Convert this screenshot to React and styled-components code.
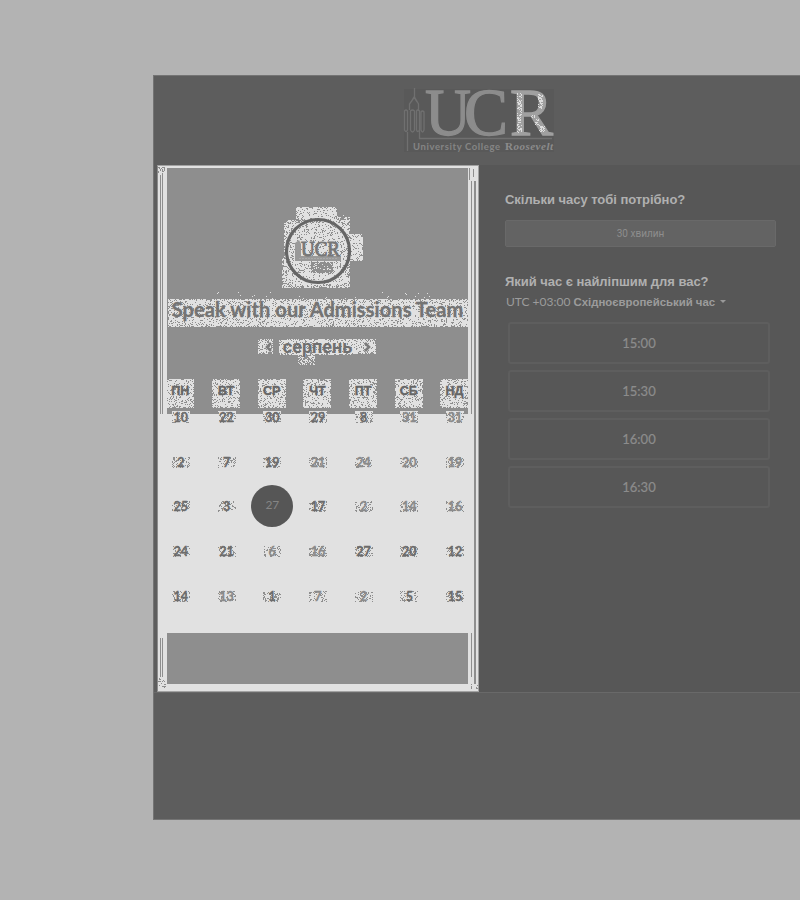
import React from 'react';
import styled, { createGlobalStyle } from 'styled-components';

const Global = createGlobalStyle`
  * { box-sizing: border-box; }
  body { margin: 0; background: #b3b3b3; overflow: hidden; }
`;

const Page = styled.div`
  width: 800px;
  height: 900px;
  padding: 75px 0 0 153px;
  background: #b3b3b3;
  font-family: 'Liberation Sans', sans-serif;
  overflow: hidden;
`;
const Dialog = styled.main`
  height: 745px;
  background: #5d5d5d;
  border: 1px solid #747474;
  border-right: 0;
  display: flex;
  flex-direction: column;
`;
const Header = styled.header`
  height: 89px;
  padding: 12px 0 0 249px;
`;
const Logo = styled.svg`
  display: block;
  overflow: visible;
`;
const Body = styled.div`
  display: flex;
  height: 528px;
  padding-left: 3px;
  border-bottom: 1px solid #696969;
`;
const Calendar = styled.section`
  width: 322px;
  height: 527px;
  flex: none;
  display: flex;
  flex-direction: column;
  background: #e1e1e1;
  border: 1px solid #a2a2a2;
  border-left-color: #8b8b8b;
  position: relative;
  padding-top: 2px;
`;
const Intro = styled.div`
  height: 246px;
  margin: 0 10px 0 9px;
  background: #8e8e8e;
  display: flex;
  flex-direction: column;
  align-items: center;
`;
const Bottom = styled.div`
  height: 51px;
  margin: 0 10px 0 9px;
  background: #8e8e8e;
`;
const EdgeRules = styled.svg`
  position: absolute;
  inset: 0;
`;
const Badge = styled.div`
  height: 131px;
  width: 301px;
  flex: none;
`;
const Title = styled.h1`
  position: relative;
  height: 28px;
  width: 301px;
  flex: none;
  margin: 0;
  font: 700 20px/20px Lato, sans-serif;
  color: #747474;
  text-align: center;
  white-space: nowrap;
  letter-spacing: 0.08px;
  -webkit-text-stroke: 0.3px #747474;
`;
const Front = styled.span`
  position: relative;
`;
const Month = styled.div`
  margin-top: 12px;
  height: 16px;
  width: 120px;
  display: flex;
  justify-content: space-between;
  align-items: center;
  padding: 0 7px 0 7px;
  position: relative;
  font: 700 18px/16px Roboto, sans-serif;
  color: #707070;
`;
const Chevron = styled.svg`
  position: relative;
  width: 7px;
  height: 10px;
  fill: none;
  stroke: #7c7c7c;
  stroke-width: 2.6;
`;
const Weekdays = styled.div`
  display: grid;
  grid-template-columns: repeat(7, 45.7px);
  width: 320px;
  flex: none;
  margin-top: 24px;
`;
const Weekday = styled.div`
  height: 29px;
  position: relative;
  text-align: center;
  font: 700 12.5px/25px 'Liberation Sans', sans-serif;
  color: #666;
  -webkit-text-stroke: 0.4px #666;
`;
const Days = styled.div`
  height: 219px;
  display: grid;
  grid-template-columns: repeat(7, 45.7px);
  grid-template-rows: repeat(5, 44.7px);
  align-content: start;
`;
const Day = styled.div`
  position: relative;
  margin-top: -4px;
  height: 14px;
  text-align: center;
  font: 700 12.5px/15.5px Lato, sans-serif;
  color: ${(p) => (p.$faded ? '#8b8b8b' : '#6c6c6c')};
  -webkit-text-stroke: 0.3px currentColor;
`;
const Selected = styled.div`
  width: 42px;
  height: 42px;
  margin: -18px auto 0 2px;
  border-radius: 50%;
  background: #565656;
  color: #858585;
  text-align: center;
  font: 400 12px/40px Lato, sans-serif;
`;
const Patch = styled.svg`
  position: absolute;
  left: 50%;
  top: ${(p) => p.$top || 0}px;
  transform: translateX(-50%);
  shape-rendering: crispEdges;
`;
const Times = styled.section`
  flex: 1;
  background: #575757;
  padding: 26px 24px 0 26px;
  color: #b0b0b0;
`;
const Question = styled.h2`
  margin: 0;
  font: 700 13px/17px 'Liberation Sans', sans-serif;
  white-space: nowrap;
  letter-spacing: -0.04px;
`;
const Duration = styled.button`
  display: block;
  width: 271px;
  height: 27px;
  margin: 12px 0 26px;
  padding: 0;
  border: 1px solid #696969;
  border-radius: 2px;
  background: #636363;
  color: #8e8e8e;
  font: 400 10px/25px Roboto, sans-serif;
`;
const Zone = styled.div`
  display: flex;
  align-items: center;
  height: 16px;
  margin-top: 4px;
  font: 700 11.4px/16px 'Liberation Sans', sans-serif;
  color: #9c9c9c;
  white-space: nowrap;
`;
const Offset = styled.span`
  font: 400 12px/16px Lato, sans-serif;
  margin: 0 3px 0 1px;
`;
const Caret = styled.svg`
  width: 6px;
  height: 4px;
  margin-left: 5px;
  fill: #999;
`;
const Slots = styled.div`
  display: grid;
  gap: 6px;
  padding: 12px 0 0 3px;
`;
const Slot = styled.button`
  width: 262px;
  height: 42px;
  padding: 0;
  border: 2px solid #5e5e5e;
  border-radius: 3px;
  background: #575757;
  color: #8c8c8c;
  font: 400 13px/36px Lato, sans-serif;
  -webkit-text-stroke: 0.2px #8c8c8c;
`;

function grain(x0, y0, w, h, density, seed, soft = 0) {
  let n = seed * 7919 + 17;
  let d = '';
  for (let y = 0; y < h; y++) {
    for (let x = 0; x < w; x++) {
      n = (n + 0x6d2b79f5) | 0;
      let t = Math.imul(n ^ (n >>> 15), 1 | n);
      t = (t + Math.imul(t ^ (t >>> 7), 61 | t)) ^ t;
      const value = ((t ^ (t >>> 14)) >>> 0) / 4294967296;
      const edge = Math.min(x, y, w - 1 - x, h - 1 - y);
      const limit = edge < soft ? density * 0.7 : density;
      if (value < limit) d += `M${x0 + x} ${y0 + y}h1v1h-1z`;
    }
  }
  return d;
}

function Grain({ w, h, top, seed = 1, density = 0.78, color = '#e1e1e1', soft = 1 }) {
  return (
    <Patch width={w} height={h} $top={top} aria-hidden="true">
      <path fill={color} d={grain(0, 0, w, h, density, seed, soft)} />
    </Patch>
  );
}

function CollegeLogo() {
  return (
    <Logo width="152" height="66" viewBox="403 88 152 66">
      <path fill="#595959" d="M404 89h150v63H404z" />
      <g fill="none" stroke="#707070" strokeWidth="1.3">
        <path d="M407.500 151v-19M404.500 111q1.500-2 3 0v19q-1.500 3-3 0zM410.500 111q2-2 4 0v19q-2 4-4 0zM416.500 111q1-2 3 0v19q-2 3-3 0zM421 112q1.500-2 3 0v18q-1.500 4-3 0zM409.500 110v-6l5-7v-9M414.500 97l4 7v7M411 102l3-5 3 5M419.500 130v8.500H552" />
      </g>
      <g fontFamily="Liberation Serif, serif" fontSize="68" strokeWidth="1.3">
        <text x="425" y="134.500" fill="#8c8c8c" stroke="#8c8c8c" textLength="46" lengthAdjust="spacingAndGlyphs">U</text>
        <text x="464" y="134.500" fill="#8c8c8c" stroke="#8c8c8c" textLength="44" lengthAdjust="spacingAndGlyphs">C</text>
        <text x="510" y="135" fill="#a0a0a0" stroke="#a0a0a0" textLength="43" lengthAdjust="spacingAndGlyphs">R</text>
      </g>
      <path d={grain(517, 92, 5, 41, 0.4, 4) + grain(538, 94, 5, 15, 0.5, 5) + grain(531, 114, 4, 5, 0.5, 6) + grain(535, 119, 4, 6, 0.5, 7) + grain(539, 125, 6, 7, 0.5, 8)} fill="#ddd" shapeRendering="crispEdges" />
      <text x="413" y="149.500" fill="#858585" fontFamily="Lato, sans-serif" fontSize="9.500" fontWeight="700" textLength="87" lengthAdjust="spacing">University College</text>
      <text x="505" y="149.500" fill="#8c8c8c" fontFamily="Liberation Serif, serif" fontSize="11" fontWeight="700" textLength="48" lengthAdjust="spacing">
        R<tspan fontStyle="italic">oosevelt</tspan>
      </text>
    </Logo>
  );
}

function RoundLogo() {
  return (
    <Logo width="301" height="131" viewBox="167 168 301 131">
      <g fill="#e1e1e1" shapeRendering="crispEdges">
        <path d={grain(284, 220, 66, 68, 0.82, 9, 3)} />
        <path d={grain(296, 207, 41, 13, 0.86, 10, 1)} />
        <path d={grain(350, 234, 13, 27, 0.82, 11, 1)} />
        <path d={grain(282, 258, 4, 30, 0.5, 12) + grain(337, 215, 13, 7, 0.25, 13) + grain(215, 292, 230, 7, 0.018, 14)} />
      </g>
      <circle cx="318" cy="251" r="31.500" fill="none" stroke="#666" strokeWidth="3.200" />
      <path fill="#999" d="M295 243l4-3 2 4v12h40v5h-46z" />
      <path d="M299 258.500h39" stroke="#aaa" strokeDasharray="2 1" />
      <text x="301" y="255.500" fill="#777" stroke="#777" strokeWidth="1" fontFamily="Liberation Serif, serif" fontSize="22" textLength="39" lengthAdjust="spacingAndGlyphs">UCR</text>
      <path fill="#8e8e8e" d="M311 262h22v11h-22z" />
      <path fill="#e1e1e1" d={grain(311, 262, 22, 11, 0.12, 20)} shapeRendering="crispEdges" />
    </Logo>
  );
}

const weekdays = ['ПН', 'ВТ', 'СР', 'ЧТ', 'ПТ', 'СБ', 'НД'];
const days = [
  10, 22, 30, 29, 8, 31, 31,
  2, 7, 19, 21, 24, 20, 19,
  25, 3, 27, 17, 2, 14, 16,
  24, 21, 6, 16, 27, 20, 12,
  14, 13, 1, 7, 2, 5, 15,
];
const faded = new Set([5, 6, 10, 11, 12, 13, 18, 19, 20, 23, 24, 29, 31, 32]);
const slots = ['15:00', '15:30', '16:00', '16:30'];

export default function App() {
  return (
    <Page>
      <Global />
      <Dialog>
        <Header><CollegeLogo /></Header>
        <Body>
          <Calendar>
            <EdgeRules width="320" height="525" viewBox="158 166 320 525" aria-hidden="true">
              <g fill="#8e8e8e" shapeRendering="crispEdges">
                <path d="M160 175h1v239h-1zM162 173h1v241h-1zM471 181h1v233h-1zM474 181h2v503h-2zM160 638h1v39h-1zM162 638h1v39h-1zM471 633h1v44h-1z" />
                <path d={grain(158, 167, 7, 6, 0.3, 31) + grain(158, 678, 8, 10, 0.22, 33) + grain(471, 684, 7, 6, 0.2, 34)} />
                <path d="M469 168h1v12h-1zM473 169h1v8h-1z" />
              </g>
            </EdgeRules>
            <Intro>
              <Badge><RoundLogo /></Badge>
              <Title>
                <Grain w={301} h={28} seed={40} density={0.81} />
                <Front>Speak with our Admissions Team</Front>
              </Title>
              <Month>
                <Grain w={79} h={16} seed={41} density={0.84} />
                <Patch width="120" height="32" aria-hidden="true">
                  <path fill="#e1e1e1" d={grain(0, 0, 15, 15, 0.78, 42, 2) + grain(99, 0, 19, 15, 0.8, 43, 1) + grain(40, 16, 17, 10, 0.6, 44, 3)} />
                </Patch>
                <Chevron viewBox="0 0 7 10"><path d="M6 1L2 5l4 4" /></Chevron>
                <Front>серпень</Front>
                <Chevron viewBox="0 0 7 10"><path d="M1 1l4 4-4 4" /></Chevron>
              </Month>
              <Weekdays>
                {weekdays.map((name, i) => (
                  <Weekday key={name}>
                    <Grain w={28} h={29} seed={50 + i} density={0.8} />
                    <Front>{name}</Front>
                  </Weekday>
                ))}
              </Weekdays>
            </Intro>
            <Days>
              {days.map((day, i) => i === 16 ? (
                <Selected key={i}>{day}</Selected>
              ) : (
                <Day key={i} $faded={faded.has(i)}>
                  {i < 7 && <Patch width="18" height="12" $top={1}><path fill="#e1e1e1" d="M0 0h18v12H0z" /></Patch>}
                  <Grain w={18} h={11} top={2} seed={70 + i} density={0.28} color="#8e8e8e" soft={0} />
                  <Front>{day}</Front>
                </Day>
              ))}
            </Days>
            <Bottom />
          </Calendar>
          <Times>
            <Question>Скільки часу тобі потрібно?</Question>
            <Duration>30 хвилин</Duration>
            <Question>Який час є найліпшим для вас?</Question>
            <Zone>
              <Offset>UTC +03:00</Offset>
              Східноєвропейський час
              <Caret viewBox="0 0 6 4"><path d="M0 0h6L3 3z" /></Caret>
            </Zone>
            <Slots>{slots.map((time) => <Slot key={time}>{time}</Slot>)}</Slots>
          </Times>
        </Body>
      </Dialog>
    </Page>
  );
}
